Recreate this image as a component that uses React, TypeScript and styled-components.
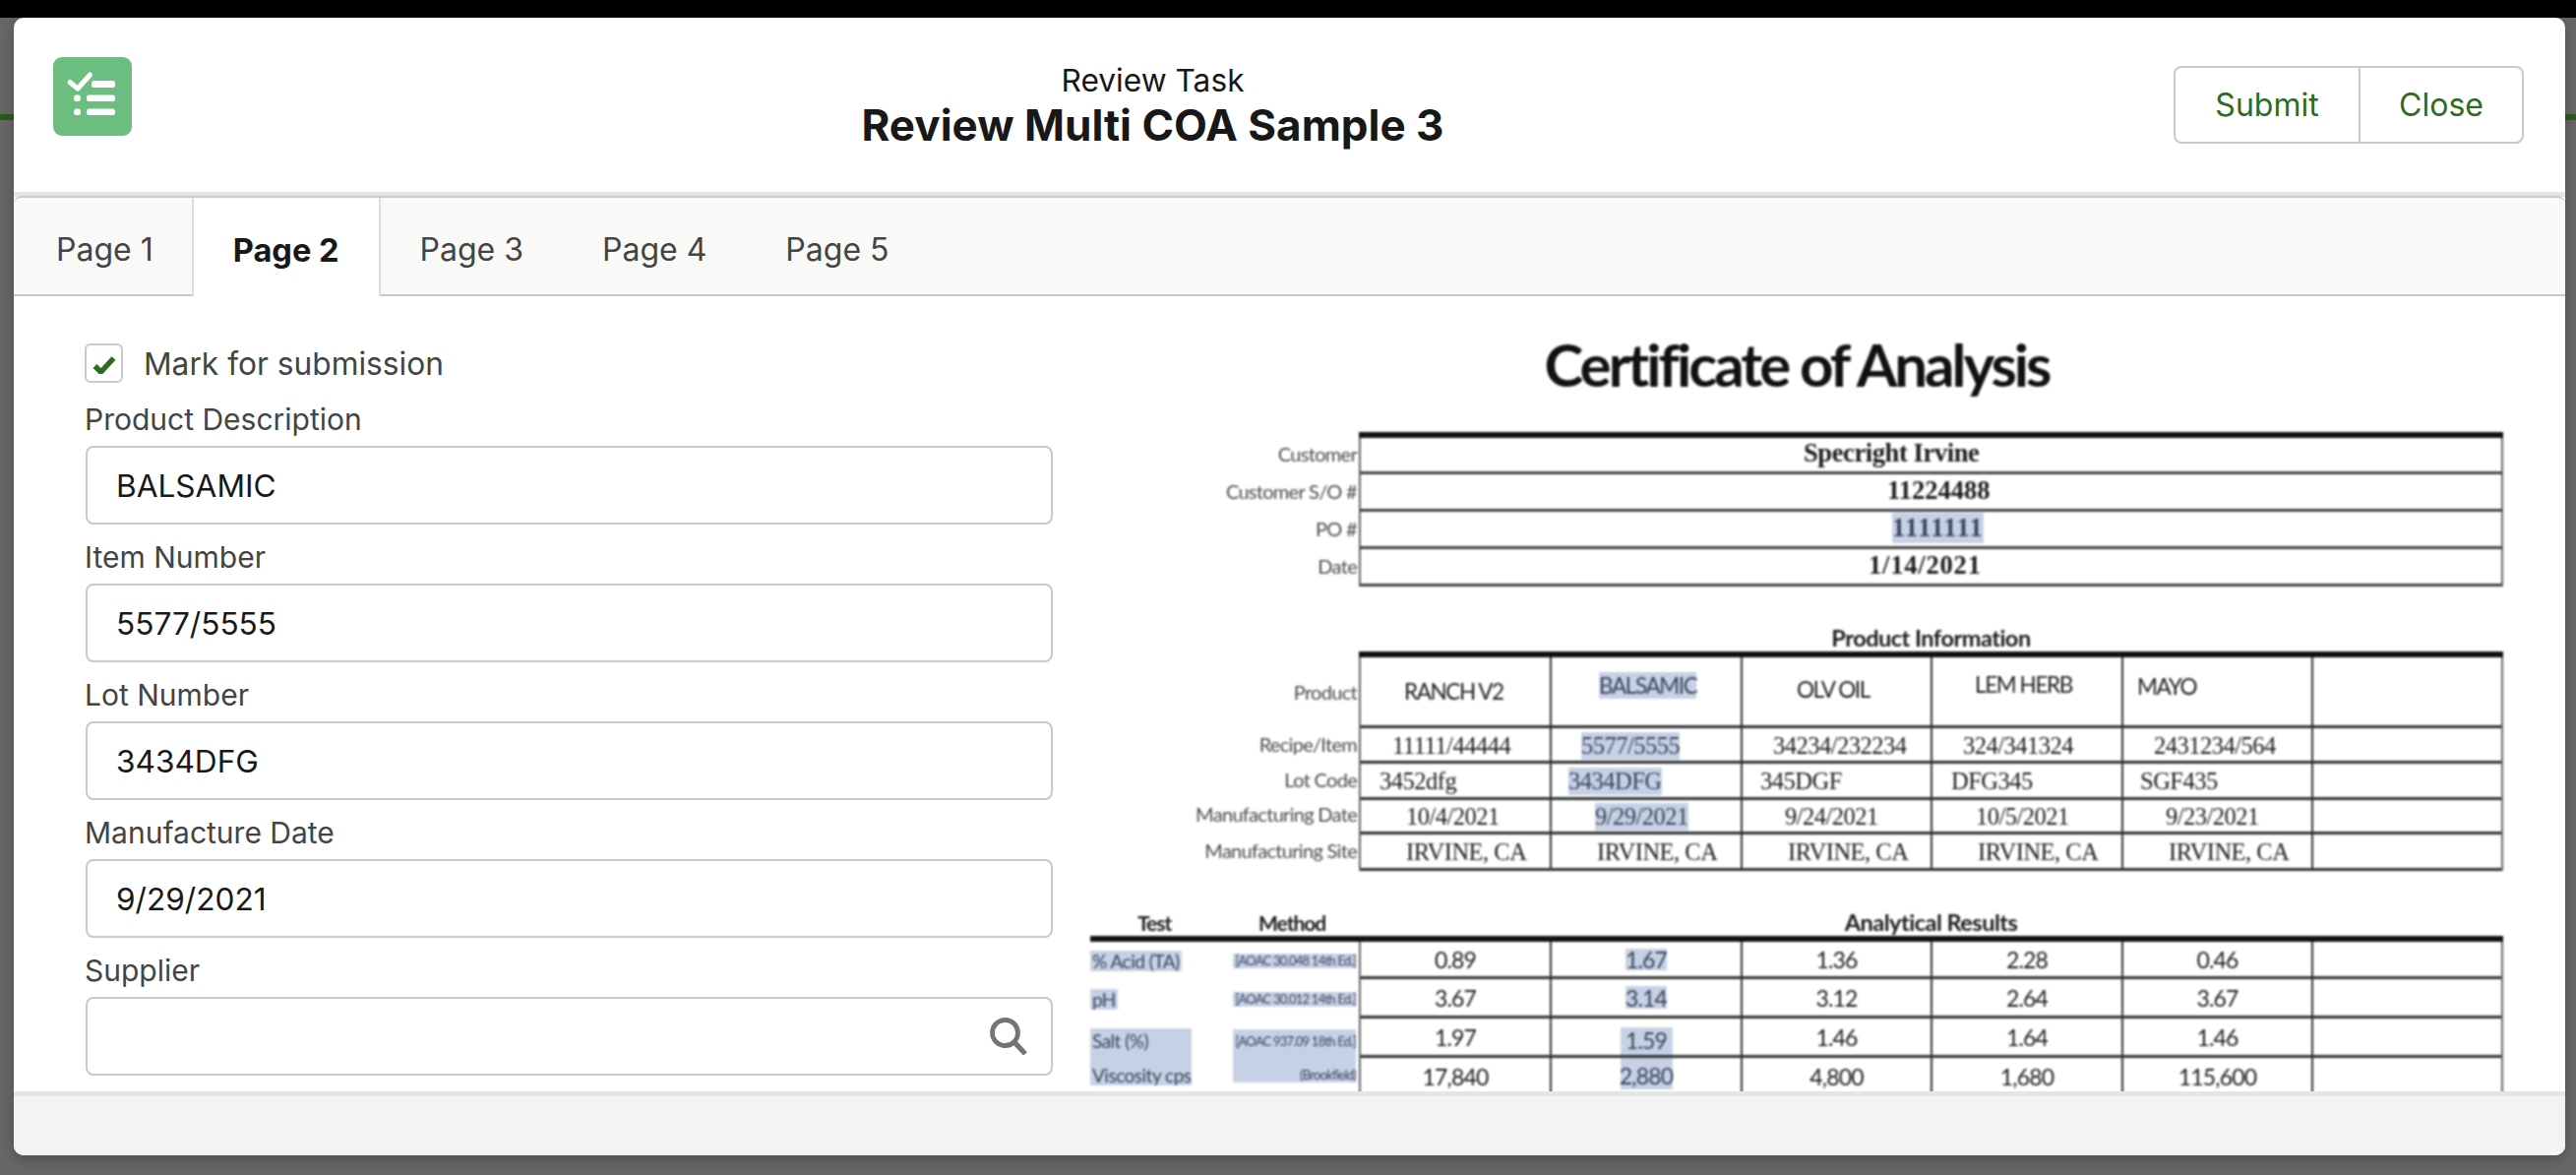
import React from 'react';
import styled, { createGlobalStyle } from 'styled-components';

const GlobalStyle = createGlobalStyle`
    html, body {
        margin: 0;
        padding: 0;
        background: #666666;
        font-family: Inter, "Liberation Sans", sans-serif;
    }
    * { box-sizing: border-box; }
`;

const Backdrop = styled.div`
    width: 2618px;
    height: 1194px;
    overflow: hidden;
    padding: 18px 11px 20px 14px;
    background:
        linear-gradient(#000, #000) top / 100% 18px no-repeat,
        linear-gradient(#2c5a1c, #2c5a1c) 0 116px / 100% 6px no-repeat,
        #676767;
`;

const Modal = styled.div`
    display: flex;
    flex-direction: column;
    height: 1156px;
    background: #fff;
    border-radius: 10px;
    overflow: hidden;
    box-shadow: 0 4px 14px rgba(0, 0, 0, 0.25);
`;

const Header = styled.header`
    display: flex;
    align-items: flex-start;
    height: 177px;
    flex: none;
    padding: 40px 42px 0 40px;
`;

const TaskIcon = styled.svg`
    width: 80px;
    height: 80px;
    flex: none;
`;

const TitleBlock = styled.div`
    flex: 1;
    text-align: center;
    color: #181818;
`;

const Eyebrow = styled.div`
    font-size: 31.7px;
    line-height: 38px;
    margin-top: 5px;
`;

const Title = styled.h1`
    margin: 0;
    font-size: 44px;
    line-height: 52px;
    font-weight: 700;
`;

const ButtonGroup = styled.div`
    display: flex;
    height: 79px;
    margin-top: 9px;
    border: 2px solid #c9c9c9;
    border-radius: 8px;
`;

const GroupButton = styled.div<{ $w: number }>`
    display: flex;
    align-items: center;
    justify-content: center;
    width: ${p => p.$w}px;
    color: #2e6b1f;
    font-size: 32px;

    & + & {
        border-left: 2px solid #c9c9c9;
    }
`;

const TabSet = styled.div`
    flex: none;
    border-top: 5px solid #e5e5e5;
`;

const TabBar = styled.nav`
    display: flex;
    height: 102px;
    background: #f9f9f8;
    border-top: 2px solid #c9c9c9;
    border-bottom: 2px solid #c9c9c9;
    border-radius: 8px 8px 0 0;
    margin-top: -1px;
`;

const Tab = styled.div<{ $active?: boolean }>`
    display: flex;
    align-items: center;
    height: ${p => (p.$active ? '100px' : '98px')};
    padding: 6px 40px 0;
    font-size: ${p => (p.$active ? 32.6 : 32)}px;
    color: ${p => (p.$active ? '#181818' : '#444444')};
    font-weight: ${p => (p.$active ? 700 : 400)};
    background: ${p => (p.$active ? '#fff' : 'transparent')};
    border-left: ${p => (p.$active ? '2px solid #dddddd' : '0')};
    border-right: ${p => (p.$active ? '2px solid #dddddd' : '0')};

    &:first-child {
        padding-left: 43px;
        padding-right: 39px;
    }
`;

const Body = styled.div`
    display: grid;
    grid-template-columns: 983px 1436px;
    column-gap: 38px;
    flex: 1;
    min-height: 0;
    overflow: hidden;
    padding-left: 73px;
`;

const Form = styled.div`
    display: flex;
    flex-direction: column;
    gap: 16px;
    padding-top: 48px;
`;

const CheckRow = styled.label`
    display: flex;
    align-items: center;
    gap: 21px;
    height: 40px;
    margin-bottom: 4px;
    font-size: 31.7px;
    color: #444444;
`;

const CheckBox = styled.span`
    display: flex;
    align-items: center;
    justify-content: center;
    width: 39px;
    height: 40px;
    margin-left: -1px;
    border: 2px solid #c9c9c9;
    border-radius: 6px;
    flex: none;
`;

const Field = styled.div`
    display: flex;
    flex-direction: column;
    gap: 10px;
`;

const FieldLabel = styled.div`
    height: 34px;
    line-height: 34px;
    margin-left: -1px;
    font-size: 30px;
    color: #444444;
`;

const FieldBox = styled.div`
    display: flex;
    align-items: center;
    justify-content: space-between;
    height: 80px;
    padding: 0 24px 0 29px;
    border: 2px solid #c9c9c9;
    border-radius: 8px;
    font-size: 31.6px;
    color: #181818;
`;

const Doc = styled.div`
    filter: blur(0.9px);
    font-family: Lato, "Liberation Sans", sans-serif;
    color: #1c1c1c;
`;

const DocTitle = styled.div`
    margin-top: 39px;
    height: 60px;
    line-height: 60px;
    text-align: center;
    font-size: 60px;
    font-weight: 700;
    letter-spacing: -3px;
    white-space: nowrap;
    color: #111;
    margin-bottom: 39px;
`;

const Caption = styled.div`
    height: 27px;
    line-height: 27px;
    margin-top: 39px;
    padding-left: 273px;
    text-align: center;
    font-size: 23.5px;
    font-weight: 700;
    letter-spacing: -0.5px;
    white-space: nowrap;
`;

const ResultsHead = styled(Caption)`
    display: grid;
    grid-template-columns: 145px 128px 1fr;
    padding-left: 0;
`;

const HeadCell = styled.div<{ $pad?: number }>`
    text-align: ${p => (p.$pad ? 'left' : 'center')};
    padding-left: ${p => p.$pad ?? 0}px;
    ${p => (p.$pad ? 'font-size: 21px; letter-spacing: -1px;' : '')}
`;

const Rule = styled.div<{ $full?: boolean }>`
    height: 6px;
    background: #111;
    margin-left: ${p => (p.$full ? 0 : 273)}px;
`;

const Row = styled.div<{ $h: number }>`
    display: grid;
    grid-template-columns: 273px 1fr;
    height: ${p => p.$h}px;
`;

const ResultRow = styled.div<{ $h: number }>`
    display: grid;
    grid-template-columns: 145px 128px 1fr;
    height: ${p => p.$h}px;
`;

const RowLabel = styled.div<{ $lift?: number }>`
    display: flex;
    align-items: center;
    justify-content: flex-end;
    padding: 0 2px ${p => p.$lift ?? 0}px 0;
    font-size: 20px;
    letter-spacing: -0.7px;
    color: #4a4a4a;
    white-space: nowrap;
`;

const Wide = styled.div<{ $pad: number; $track?: number }>`
    display: flex;
    align-items: center;
    padding: 0 0 3px ${p => p.$pad}px;
    border-left: 2px solid #666;
    border-right: 2px solid #666;
    border-bottom: 3px solid #444;
    font-family: "Liberation Serif", serif;
    font-size: 26.5px;
    font-weight: 700;
    letter-spacing: ${p => p.$track ?? -0.4}px;
    white-space: nowrap;
`;

const Cells = styled.div`
    display: grid;
    grid-template-columns: 194px 194px 193px 194px 193px 1fr;
    border-left: 2px solid #666;
    border-right: 2px solid #666;
`;

const Cell = styled.div<{ $pad?: number; $lift?: number; $serif?: boolean; $flush?: 'start' | 'end' }>`
    display: flex;
    align-items: ${p => p.$flush ?? 'center'};
    justify-content: ${p => (p.$pad === undefined ? 'center' : 'flex-start')};
    padding: ${p => (p.$serif ? 2 : 0)}px 0 ${p => p.$lift ?? 0}px ${p => p.$pad ?? 0}px;
    border-bottom: 3px solid #333;
    border-right: 2px solid #333;
    font-family: ${p => (p.$serif ? '"Liberation Serif", serif' : 'inherit')};
    font-size: ${p => (p.$serif ? 24.5 : 23)}px;
    letter-spacing: ${p => (p.$serif ? -0.5 : -0.8)}px;
    white-space: nowrap;

    &:last-child {
        border-right: 0;
    }
`;

const ProductCell = styled(Cell)`
    font-size: 22.5px;
    letter-spacing: -1.4px;
`;

const Mark = styled.span<{ $w?: number; $h?: number; $down?: number; $up?: number }>`
    display: inline-flex;
    align-items: center;
    justify-content: center;
    background: #c6d1e6;
    color: #39435a;
    ${p => (p.$w ? `width: ${p.$w}px;` : '')}
    ${p => (p.$h ? `height: ${p.$h}px;` : '')}
    ${p => (p.$down ? `padding-top: ${p.$down}px;` : '')}
    ${p => (p.$up ? `padding-bottom: ${p.$up}px;` : '')}
`;

const TestCell = styled.div<{ $flush?: 'start' | 'end' }>`
    display: flex;
    align-items: ${p => p.$flush ?? 'center'};
    font-size: 19px;
    letter-spacing: -0.5px;
    white-space: nowrap;
    color: #39435a;
`;

const TestMark = styled(Mark)`
    justify-content: flex-start;
    padding-left: 2px;
    padding-right: 2px;
`;

const MethodCell = styled.div<{ $flush?: 'start' | 'end' }>`
    display: flex;
    align-items: ${p => p.$flush ?? 'center'};
    font-size: 13px;
    letter-spacing: -0.75px;
    white-space: nowrap;
    padding-right: 3px;
`;

const MethodMark = styled(Mark)`
    width: 125px;
    justify-content: flex-end;
`;

const Footer = styled.footer`
    flex: none;
    height: 65px;
    background: #f3f3f3;
    border-top: 5px solid #e5e5e5;
`;

const columnStarts = [
    { label: 'Recipe/Item', lift: 4, h: 36, pads: [32, 30, 31, 31, 31], values: ['11111/44444', '5577/5555', '34234/232234', '324/341324', '2431234/564'] },
    { label: 'Lot Code', lift: 5, h: 37, pads: [19, 17, 18, 19, 17], values: ['3452dfg', '3434DFG', '345DGF', 'DFG345', 'SGF435'] },
    { label: 'Manufacturing Date', lift: 8, h: 35, pads: [46, 44, 43, 44, 43], values: ['10/4/2021', '9/29/2021', '9/24/2021', '10/5/2021', '9/23/2021'] },
    { label: 'Manufacturing Site', lift: 6, h: 37, pads: [46, 46, 46, 46, 46], values: ['IRVINE, CA', 'IRVINE, CA', 'IRVINE, CA', 'IRVINE, CA', 'IRVINE, CA'] }
];

const products = [
    { name: 'RANCH V2', pad: 44, lift: 0 },
    { name: 'BALSAMIC', pad: 48, lift: 12 },
    { name: 'OLV OIL', pad: 55, lift: 5 },
    { name: 'LEM HERB', pad: 43, lift: 14 },
    { name: 'MAYO', pad: 14, lift: 10 }
];

const results = [
    { h: 38, values: ['0.89', '1.67', '1.36', '2.28', '0.46'] },
    { h: 40, values: ['3.67', '3.14', '3.12', '2.64', '3.67'] },
    { h: 40, values: ['1.97', '1.59', '1.46', '1.64', '1.46'] },
    { h: 40, values: ['17,840', '2,880', '4,800', '1,680', '115,600'] }
];

const fields = [
    { label: 'Product Description', value: 'BALSAMIC' },
    { label: 'Item Number', value: '5577/5555' },
    { label: 'Lot Number', value: '3434DFG' },
    { label: 'Manufacture Date', value: '9/29/2021' }
];

const tabs = ['Page 1', 'Page 2', 'Page 3', 'Page 4', 'Page 5'];

export default function App() {
    return (
        <Backdrop>
            <GlobalStyle />
            <Modal>
                <Header>
                    <TaskIcon viewBox="0 0 80 80">
                        <rect width="80" height="80" rx="9" fill="#6cbe80" />
                        <path d="M17 25.5l8 6.5 12.5-14" fill="none" stroke="#fff" strokeWidth="5" strokeLinecap="round" strokeLinejoin="round" />
                        <rect x="39" y="24" width="24" height="7" rx="2.5" fill="#fff" />
                        <rect x="21" y="38.5" width="7" height="6.5" rx="2.5" fill="#fff" />
                        <rect x="34" y="38.5" width="29" height="6.5" rx="2.5" fill="#fff" />
                        <rect x="21" y="52.5" width="7" height="6.5" rx="2.5" fill="#fff" />
                        <rect x="34" y="52.5" width="29" height="6.5" rx="2.5" fill="#fff" />
                    </TaskIcon>
                    <TitleBlock>
                        <Eyebrow>Review Task</Eyebrow>
                        <Title>Review Multi COA Sample 3</Title>
                    </TitleBlock>
                    <ButtonGroup>
                        <GroupButton $w={186}>Submit</GroupButton>
                        <GroupButton $w={166}>Close</GroupButton>
                    </ButtonGroup>
                </Header>

                <TabSet>
                    <TabBar>
                        {tabs.map((tab, i) => (
                            <Tab key={tab} $active={i === 1}>{tab}</Tab>
                        ))}
                    </TabBar>
                </TabSet>

                <Body>
                    <Form>
                        <CheckRow>
                            <CheckBox>
                                <svg width="24" height="22" viewBox="0 0 24 22">
                                    <path d="M2.5 14l6 6L21.5 6" fill="none" stroke="#2e6b1f" strokeWidth="5.5" />
                                </svg>
                            </CheckBox>
                            Mark for submission
                        </CheckRow>
                        {fields.map(field => (
                            <Field key={field.label}>
                                <FieldLabel>{field.label}</FieldLabel>
                                <FieldBox>{field.value}</FieldBox>
                            </Field>
                        ))}
                        <Field>
                            <FieldLabel>Supplier</FieldLabel>
                            <FieldBox>
                                <span />
                                <svg width="38" height="38" viewBox="0 0 38 38">
                                    <circle cx="15.5" cy="15.5" r="13" fill="none" stroke="#747474" strokeWidth="4.8" />
                                    <path d="M25 25l11 12" fill="none" stroke="#747474" strokeWidth="5.2" />
                                </svg>
                            </FieldBox>
                        </Field>
                    </Form>

                    <Doc>
                        <DocTitle>Certificate of Analysis</DocTitle>

                        <Rule />
                        <Row $h={37}>
                            <RowLabel $lift={5}>Customer</RowLabel>
                            <Wide $pad={450}>Specright Irvine</Wide>
                        </Row>
                        <Row $h={38}>
                            <RowLabel $lift={5}>Customer S/O #</RowLabel>
                            <Wide $pad={535} $track={0}>11224488</Wide>
                        </Row>
                        <Row $h={38}>
                            <RowLabel $lift={5}>PO #</RowLabel>
                            <Wide $pad={540} $track={1.3}><Mark>1111111</Mark></Wide>
                        </Row>
                        <Row $h={38}>
                            <RowLabel $lift={5}>Date</RowLabel>
                            <Wide $pad={516} $track={0.8}>1/14/2021</Wide>
                        </Row>

                        <Caption>Product Information</Caption>
                        <Rule />
                        <Row $h={72}>
                            <RowLabel $lift={2}>Product</RowLabel>
                            <Cells>
                                {products.map(product => (
                                    <ProductCell key={product.name} $pad={product.pad} $lift={product.lift}>
                                        {product.name === 'BALSAMIC' ? <Mark>{product.name}</Mark> : product.name}
                                    </ProductCell>
                                ))}
                                <Cell />
                            </Cells>
                        </Row>
                        {columnStarts.map(row => (
                            <Row key={row.label} $h={row.h}>
                                <RowLabel $lift={row.lift}>{row.label}</RowLabel>
                                <Cells>
                                    {row.values.map((value, i) => (
                                        <Cell key={i} $serif $pad={row.pads[i]}>
                                            {i === 1 && row.label !== 'Manufacturing Site' ? <Mark>{value}</Mark> : value}
                                        </Cell>
                                    ))}
                                    <Cell />
                                </Cells>
                            </Row>
                        ))}

                        <ResultsHead>
                            <HeadCell $pad={48}>Test</HeadCell>
                            <HeadCell $pad={26}>Method</HeadCell>
                            <HeadCell>Analytical Results</HeadCell>
                        </ResultsHead>
                        <Rule $full />
                        <ResultRow $h={results[0].h}>
                            <TestCell><TestMark $h={21}>% Acid (TA)</TestMark></TestCell>
                            <MethodCell><MethodMark $h={15}>[AOAC 30.048 14th Ed.]</MethodMark></MethodCell>
                            <Cells>
                                {results[0].values.map((value, i) => (
                                    <Cell key={i}>{i === 1 ? <Mark $w={42} $h={22}>{value}</Mark> : value}</Cell>
                                ))}
                                <Cell />
                            </Cells>
                        </ResultRow>
                        <ResultRow $h={results[1].h}>
                            <TestCell><TestMark $h={21}>pH</TestMark></TestCell>
                            <MethodCell><MethodMark $h={15}>[AOAC 30.012 14th Ed.]</MethodMark></MethodCell>
                            <Cells>
                                {results[1].values.map((value, i) => (
                                    <Cell key={i}>{i === 1 ? <Mark $w={42} $h={23}>{value}</Mark> : value}</Cell>
                                ))}
                                <Cell />
                            </Cells>
                        </ResultRow>
                        <ResultRow $h={results[2].h}>
                            <TestCell $flush="end"><TestMark $w={103} $h={30} $up={6}>Salt (%)</TestMark></TestCell>
                            <MethodCell $flush="end"><MethodMark $h={29} $up={5}>[AOAC 937.09 18th Ed.]</MethodMark></MethodCell>
                            <Cells>
                                {results[2].values.map((value, i) => (
                                    <Cell key={i} $flush={i === 1 ? 'end' : undefined}>{i === 1 ? <Mark $w={53} $h={28} $up={3}>{value}</Mark> : value}</Cell>
                                ))}
                                <Cell />
                            </Cells>
                        </ResultRow>
                        <ResultRow $h={results[3].h}>
                            <TestCell $flush="start"><TestMark $w={103} $h={28} $down={6}>Viscosity cps</TestMark></TestCell>
                            <MethodCell $flush="start"><MethodMark $h={25} $down={9}>(Brookfield)</MethodMark></MethodCell>
                            <Cells>
                                {results[3].values.map((value, i) => (
                                    <Cell key={i} $flush={i === 1 ? 'start' : undefined}>{i === 1 ? <Mark $w={53} $h={32} $down={3}>{value}</Mark> : value}</Cell>
                                ))}
                                <Cell />
                            </Cells>
                        </ResultRow>
                    </Doc>
                </Body>

                <Footer />
            </Modal>
        </Backdrop>
    );
}
